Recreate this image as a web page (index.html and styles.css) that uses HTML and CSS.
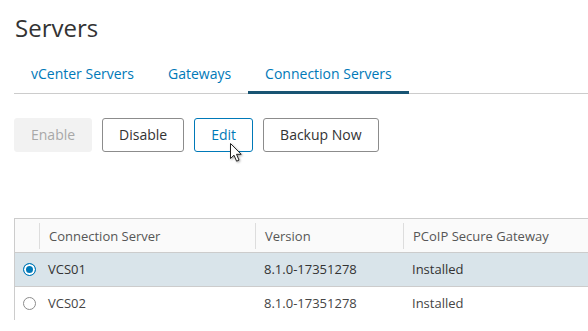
FILE: index.html
```html
<!DOCTYPE html>
<html lang="en">
<head>
    <meta charset="UTF-8">
    <meta name="viewport" content="width=device-width, initial-scale=1.0">
    <title>Servers</title>
    <link rel="stylesheet" href="styles.css">
</head>
<body>
    <div class="page">
        <h1 class="page-title">Servers</h1>
        <nav class="tabs">
            <a class="tab">vCenter Servers</a>
            <a class="tab">Gateways</a>
            <a class="tab active">Connection Servers</a>
        </nav>

        <div class="toolbar">
            <button class="btn btn-disabled">Enable</button>
            <button class="btn">Disable</button>
            <button class="btn btn-focus">Edit
                <svg class="cursor" width="14" height="21" viewBox="0 0 14 21">
                    <path d="M1.5 1.5 L1.5 16.5 L5 13.2 L7.6 19.2 L10 18.1 L7.5 12.3 L12.2 12.3 Z" fill="#fff" stroke="#222" stroke-width="1" stroke-linejoin="round"/>
                </svg>
            </button>
            <button class="btn">Backup Now</button>
        </div>

        <div class="grid">
            <div class="grid-row grid-head">
                <div class="cell"></div>
                <div class="cell"><span class="head-label">Connection Server</span></div>
                <div class="cell"><span class="head-label">Version</span></div>
                <div class="cell"><span class="head-label">PCoIP Secure Gateway</span></div>
            </div>
            <div class="grid-row selected">
                <div class="cell"><span class="radio checked"></span></div>
                <div class="cell">VCS01</div>
                <div class="cell">8.1.0-17351278</div>
                <div class="cell">Installed</div>
            </div>
            <div class="grid-row">
                <div class="cell"><span class="radio"></span></div>
                <div class="cell">VCS02</div>
                <div class="cell">8.1.0-17351278</div>
                <div class="cell">Installed</div>
            </div>
        </div>
    </div>
</body>
</html>
```

FILE: styles.css
```css
html, body {
    margin: 0;
    padding: 0;
    overflow: hidden;
    background-color: #fff;
}
body {
    font-family: "Open Sans", sans-serif;
    color: #333;
}
.page {
    padding: 12px 0 0 14px;
}
.page-title {
    margin: 0 0 0 1px;
    font-size: 24px;
    line-height: 32px;
    font-weight: 400;
    color: #333;
}
.tabs {
    display: flex;
    margin-top: 13px;
    border-bottom: 1px solid #ccc;
}
.tab {
    padding: 7px 17px 9px;
    font-size: 14px;
    line-height: 20px;
    color: #0079b8;
    cursor: pointer;
}
.tab.active {
    padding-bottom: 7px;
    margin-bottom: -1px;
    border-bottom: 3px solid #185473;
}
.toolbar {
    display: flex;
    gap: 10px;
    margin-top: 24px;
}
.btn {
    position: relative;
    padding: 6px 16px;
    font-family: "Open Sans", sans-serif;
    font-size: 14px;
    line-height: 20px;
    color: #333;
    background-color: #fff;
    border: 1px solid #8c8c8c;
    border-radius: 3px;
    cursor: pointer;
}
.btn-disabled {
    color: #a8a8a8;
    background-color: #f2f2f2;
    border-color: #f2f2f2;
}
.btn-focus {
    color: #0079b8;
    border-color: #0079b8;
}
.cursor {
    position: absolute;
    left: 34px;
    top: 23px;
    filter: drop-shadow(1px 1px 1px rgba(0, 0, 0, 0.35));
}
.grid {
    margin-top: 66px;
    border-top: 1px solid #ccc;
    border-left: 1px solid #ccc;
}
.grid-row {
    display: grid;
    grid-template-columns: 24px 216px 148px 1fr;
    height: 33px;
    border-bottom: 1px solid #ccc;
    font-size: 13px;
    line-height: 33px;
    color: #454545;
}
.grid-row:last-child {
    border-bottom: none;
}
.grid-head {
    background-color: #fafafa;
    color: #565656;
    align-items: center;
}
.grid-head .cell {
    padding: 0;
}
.head-label {
    display: block;
    height: 26px;
    line-height: 26px;
    padding-left: 9px;
    border-left: 1px solid #ddd;
}
.cell {
    padding-left: 9px;
    white-space: nowrap;
    overflow: hidden;
}
.cell:first-child {
    padding-left: 8px;
    display: flex;
    align-items: center;
}
.selected {
    background-color: #d9e4ea;
    color: #333;
}
.radio {
    width: 11px;
    height: 11px;
    border: 1px solid #8c8c8c;
    border-radius: 50%;
    background-color: #fff;
}
.radio.checked {
    border-color: #0079b8;
    background-color: #0079b8;
    box-shadow: inset 0 0 0 2px #fff;
}
```
